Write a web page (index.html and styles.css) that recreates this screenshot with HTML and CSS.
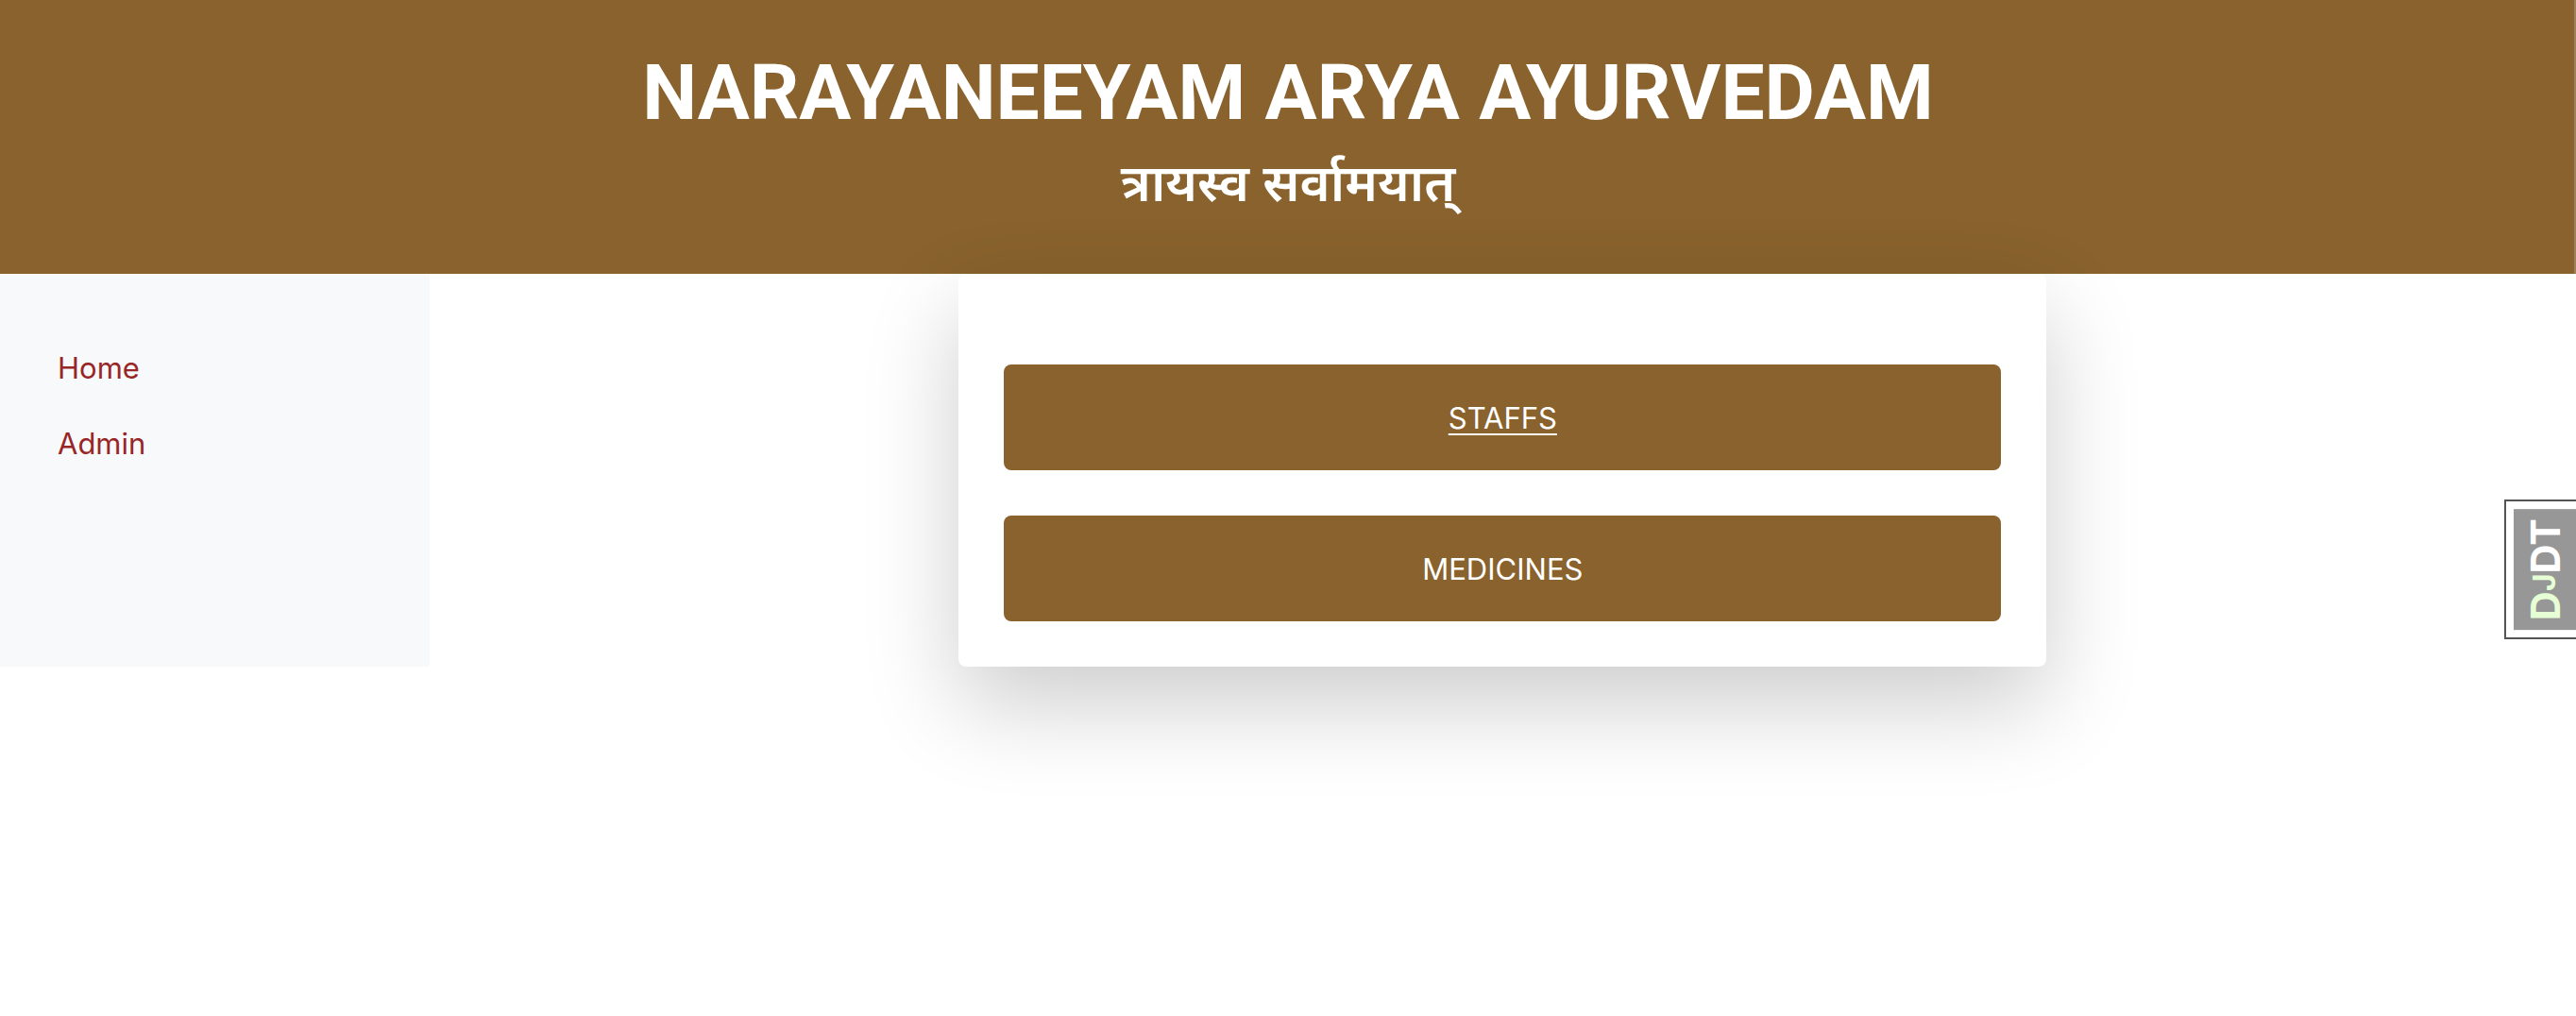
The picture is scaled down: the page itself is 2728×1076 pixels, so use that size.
FILE: index.html
```html
<!DOCTYPE html>
<html lang="en">
<head>
<meta charset="utf-8">
<meta name="viewport" content="width=device-width, initial-scale=1">
<title>Narayaneeyam Arya Ayurvedam</title>
<link rel="stylesheet" href="styles.css">
</head>
<body>
<header class="banner">
  <h1 class="banner-title">NARAYANEEYAM ARYA AYURVEDAM</h1>
  <p class="banner-motto" lang="sa">त्रायस्व सर्वामयात्</p>
</header>
<div class="layout">
  <nav class="sidebar">
    <a class="sidebar-link" href="#">Home</a>
    <a class="sidebar-link" href="#">Admin</a>
  </nav>
  <main class="content">
    <section class="card">
      <a class="card-link card-link-active" href="#">STAFFS</a>
      <a class="card-link" href="#">MEDICINES</a>
    </section>
  </main>
</div>
<div class="toolbar-handle">
  <button class="toolbar-button" type="button"><span class="dj">D<span class="small">J</span></span>DT</button>
</div>
</body>
</html>
```
FILE: styles.css
```css
* {
  box-sizing: border-box;
}

body {
  min-height: 100vh;
  margin: 0;
  background: #fff;
  font-family: Inter, "Noto Sans", "Liberation Sans", sans-serif;
  font-size: 31px;
  line-height: 48px;
}

.banner {
  padding: 48px;
  background: #89622d;
  box-shadow: inset -2px 0 #a08056;
  color: #fff;
  text-align: center;
}

.banner-title {
  margin: 0;
  font-family: Roboto, Inter, sans-serif;
  font-size: 82px;
  line-height: 100px;
  font-weight: 700;
}

.banner-motto {
  margin: 0;
  padding: 4px 0 10px;
  font-family: "Noto Sans", sans-serif;
  font-size: 55px;
  line-height: 80px;
  font-weight: 600;
}

.layout {
  display: grid;
  grid-template-columns: 1fr 5fr;
}

.sidebar {
  display: flex;
  flex-direction: column;
  align-items: flex-start;
  gap: 32px;
  padding: 76px 61px;
  background: #f7f9fb;
}

.sidebar-link {
  color: #992626;
  text-decoration: none;
}

.card {
  display: flex;
  flex-direction: column;
  gap: 48px;
  max-width: 1152px;
  margin: 0 auto;
  padding: 96px 48px 48px;
  border-radius: 8px;
  background: #fff;
  box-shadow: 0 40px 100px rgba(0, 0, 0, 0.2);
}

.card-link {
  padding: 33px 32px 31px;
  border-radius: 8px;
  background: #89622d;
  color: #fff;
  text-align: center;
  text-decoration: none;
}

.card-link-active {
  text-decoration: underline 2px;
  text-underline-offset: 5px;
}

.toolbar-handle {
  position: fixed;
  top: 529px;
  right: 0;
  padding: 8px 0 8px 8px;
  border: 2px solid #545454;
  border-right: 0;
  background: #fff;
}

.toolbar-button {
  display: block;
  padding: 10px 8px;
  border: 0;
  background: #979797;
  color: #fff;
  font: 700 43px/50px Inter, "Liberation Sans", sans-serif;
  writing-mode: vertical-rl;
  transform: rotate(180deg);
}

.dj {
  color: #e6ffd4;
}

.small {
  font-size: 32px;
}
```
